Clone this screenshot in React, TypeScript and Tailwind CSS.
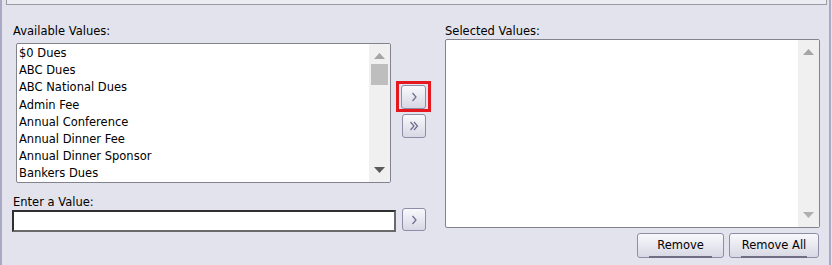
import React from "react";

const available = [
  "$0 Dues",
  "ABC Dues",
  "ABC National Dues",
  "Admin Fee",
  "Annual Conference",
  "Annual Dinner Fee",
  "Annual Dinner Sponsor",
  "Bankers Dues",
];

const btn =
  "relative flex items-center justify-center rounded-[3px] border border-[#8d8da8] bg-gradient-to-b from-[#f8f8fc] to-[#d8d8e5] text-[#5f5f7c]";

function UpArrow({ color }: { color: string }) {
  return (
    <svg width="11" height="6" viewBox="0 0 11 6">
      <path d="M5.5 0 L11 6 L0 6 Z" fill={color} />
    </svg>
  );
}

function DownArrow({ color }: { color: string }) {
  return (
    <svg width="11" height="6" viewBox="0 0 11 6">
      <path d="M0 0 L11 0 L5.5 6 Z" fill={color} />
    </svg>
  );
}

function Chevron({ double }: { double?: boolean }) {
  return (
    <svg width="12" height="12" viewBox="0 0 12 12" fill="none" stroke="#6c6c8c" strokeWidth="1.2">
      {double ? (
        <>
          <path d="M2.5 2 L6 6 L2.5 10" />
          <path d="M6 2 L9.5 6 L6 10" />
        </>
      ) : (
        <path d="M4.5 2 L8 6 L4.5 10" />
      )}
    </svg>
  );
}

function Scrollbar({ thumb, down }: { thumb?: boolean; down: string }) {
  return (
    <div className="flex w-[21px] flex-col items-center bg-[#f0f0f0] py-[9px]">
      <UpArrow color="#a5a5a5" />
      {thumb && <div className="mt-[5px] h-[21px] w-[17px] bg-[#bebebe]" />}
      <div className="flex-1" />
      <DownArrow color={down} />
    </div>
  );
}

export default function App() {
  return (
    <div
      className="flex h-[265px] w-[832px] overflow-hidden bg-[#e3e3ed] text-[11.5px] text-black"
      style={{ fontFamily: '"DejaVu Sans", Tahoma, sans-serif' }}
    >
      <div className="w-[2px] bg-[#a9a9c4]" />

      <div className="flex w-[827px] flex-col">
        <div className="ml-[4px] h-[5px] w-[821px] border-x border-b border-[#9b9ba3] bg-[#ececf3]" />

        <div className="flex">
          {/* left side */}
          <div className="ml-[10px] flex w-[424px] flex-col">
            <div className="mt-[19px] ml-[1px] h-[14px] leading-[14px]">Available Values:</div>

            <div className="mt-[5px] flex">
              <div className="ml-[4px] flex h-[140px] w-[375px] overflow-hidden rounded-[2px] border border-[#82838c] bg-white">
                <ul className="flex-1 px-[2px] pt-[1px]">
                  {available.map((v) => (
                    <li key={v} className="h-[17.2px] leading-[17.2px]">
                      {v}
                    </li>
                  ))}
                </ul>
                <Scrollbar thumb down="#5a5a5a" />
              </div>

              <div className="ml-[5px] mt-[38px] flex flex-col">
                <div className="flex h-[31px] w-[35px] items-start border-[3px] border-[#e5171f] pl-[2px] pt-[1px]">
                  <button className={`${btn} h-[24px] w-[25px]`}>
                    <Chevron />
                  </button>
                </div>
                <button className={`${btn} ml-[6px] mt-[2px] h-[24px] w-[24px]`}>
                  <Chevron double />
                </button>
              </div>
            </div>

            <div className="mt-[12px] ml-[1px] h-[14px] leading-[14px]">Enter a Value:</div>

            <div className="flex items-start">
              <input
                className="mt-[1px] h-[22px] w-[384px] border-2 border-[#303030] border-b-[#6a6a6a] border-r-[#6a6a6a] bg-white outline-none"
                aria-label="Enter a Value"
              />
              <button className={`${btn} ml-[6px] mt-[-1px] h-[23px] w-[24px]`}>
                <Chevron />
              </button>
            </div>
          </div>

          {/* right side */}
          <div className="ml-[9px] flex w-[375px] flex-col">
            <div className="mt-[19px] h-[14px] leading-[14px]">Selected Values:</div>
            <div className="mt-[1px] flex h-[189px] overflow-hidden rounded-[2px] border border-[#82838c] bg-white">
              <div className="flex-1" />
              <Scrollbar down="#b0b0b0" />
            </div>
            <div className="mt-[5px] flex justify-end gap-[5px] pr-[1px]">
              <button className={`${btn} h-[25px] w-[87px] text-black`}>
                Remove
                <span className="absolute bottom-[-1px] left-[11px] right-[11px] h-[2px] bg-[#6e6e84]" />
              </button>
              <button className={`${btn} h-[25px] w-[90px] text-black`}>
                Remove All
                <span className="absolute bottom-[-1px] left-[11px] right-[11px] h-[2px] bg-[#6e6e84]" />
              </button>
            </div>
          </div>
        </div>
      </div>

      <div className="w-[2px] bg-[#a9a9c4]" />
    </div>
  );
}
